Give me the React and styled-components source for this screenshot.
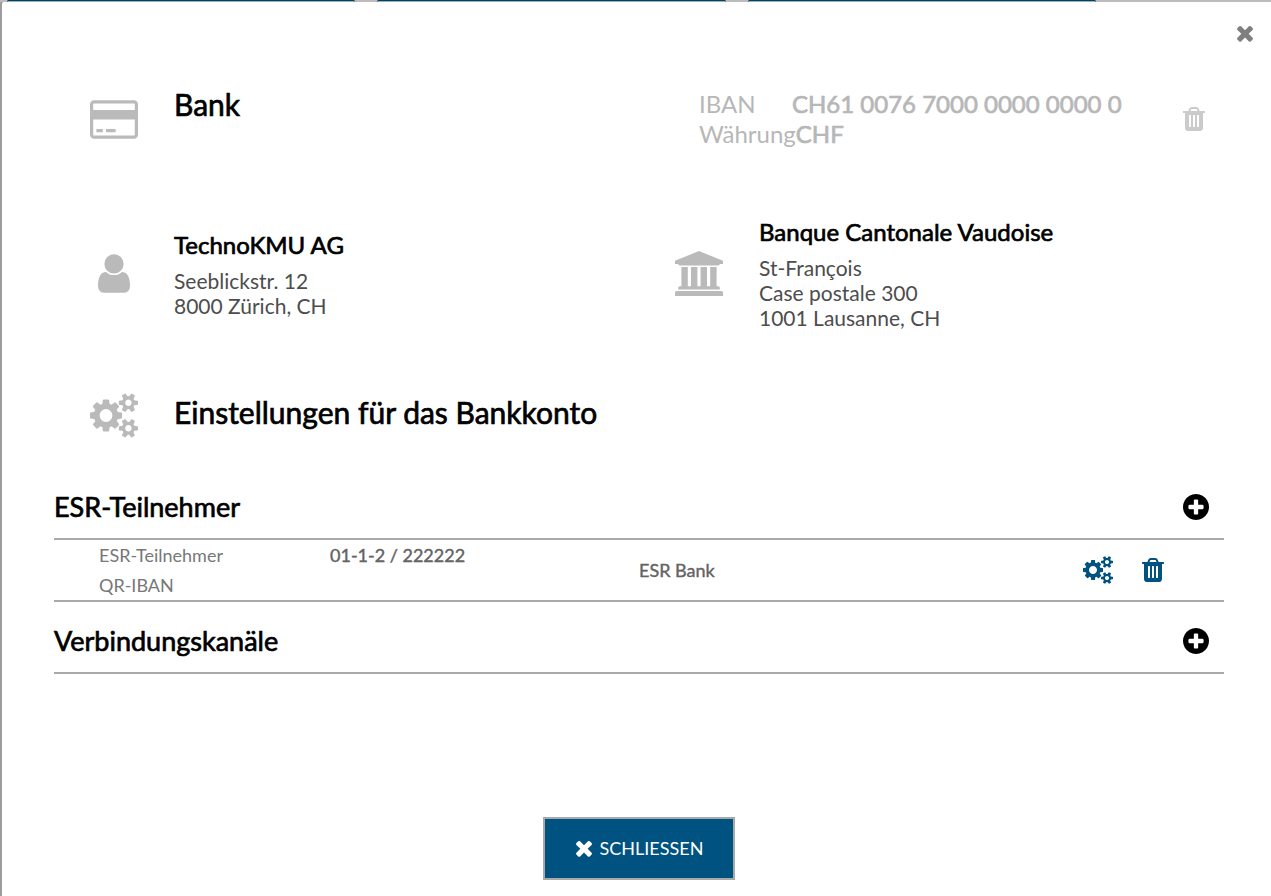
import React from "react";
import styled, { createGlobalStyle, css } from "styled-components";

const color = {
  primary: "#005380",
  primaryDimmed: "#004166",
  rule: "#a9a9a9",
  icon: "#bababa",
  muted: "#b7b7b7",
};

const GlobalStyle = createGlobalStyle`
  *, *::before, *::after { box-sizing: border-box; }
  body {
    margin: 0;
    background: #9c9c9c;
    color: #000;
    font-family: Lato, "Open Sans", sans-serif;
  }
  h1, h2, h3, p, dl, dd { margin: 0; font-weight: 400; }
`;

const paths = {
  times: [
    "0 0 1792 1792",
    "M1490 1322q0 40-28 68l-136 136q-28 28-68 28t-68-28l-294-294-294 294q-28 28-68 28t-68-28l-136-136q-28-28-28-68t28-68l294-294-294-294q-28-28-28-68t28-68l136-136q28-28 68-28t68 28l294 294 294-294q28-28 68-28t68 28l136 136q28 28 28 68t-28 68l-294 294 294 294q28 28 28 68z",
  ],
  plus: [
    "128 128 1536 1536",
    "M1344 960v-128q0-26-19-45t-45-19h-256v-256q0-26-19-45t-45-19h-128q-26 0-45 19t-19 45v256h-256q-26 0-45 19t-19 45v128q0 26 19 45t45 19h256v256q0 26 19 45t45 19h128q26 0 45-19t19-45v-256h256q26 0 45-19t19-45zm320-64q0 209-103 385.5t-279.5 279.5-385.5 103-385.5-103-279.5-279.5-103-385.5 103-385.5 279.5-279.5 385.5-103 385.5 103 279.5 279.5 103 385.5z",
  ],
  trash: [
    "192 128 1408 1536",
    "M704 1376v-704q0-14-9-23t-23-9h-64q-14 0-23 9t-9 23v704q0 14 9 23t23 9h64q14 0 23-9t9-23zm256 0v-704q0-14-9-23t-23-9h-64q-14 0-23 9t-9 23v704q0 14 9 23t23 9h64q14 0 23-9t9-23zm256 0v-704q0-14-9-23t-23-9h-64q-14 0-23 9t-9 23v704q0 14 9 23t23 9h64q14 0 23-9t9-23zm-544-992h448l-48-117q-7-9-17-11h-317q-10 2-17 11zm928 32v64q0 14-9 23t-23 9h-96v948q0 83-47 143.5t-113 60.5h-832q-66 0-113-58.5t-47-141.5v-952h-96q-14 0-23-9t-9-23v-64q0-14 9-23t23-9h309l70-167q15-37 54-63t79-26h320q40 0 79 26t54 63l70 167h309q14 0 23 9t9 23z",
  ],
  card: [
    "0 0 1920 1536",
    "M1760 0q66 0 113 47t47 113v1216q0 66-47 113t-113 47H160q-66 0-113-47T0 1376V160Q0 94 47 47T160 0h1600zM160 128q-13 0-22.5 9.5T128 160v224h1664V160q0-13-9.5-22.5T1760 128H160zm1600 1280q13 0 22.5-9.5t9.5-22.5V768H128v608q0 13 9.5 22.5t22.5 9.5h1600zM256 1280v-128h256v128H256zm384 0v-128h384v128H640z",
  ],
  user: [
    "256 128 1280 1536",
    "M1536 1399q0 109-62.5 187t-150.5 78h-854q-88 0-150.5-78t-62.5-187q0-85 8.5-160.5t31.5-152 58.5-131 94-89 134.5-34.5q131 128 313 128t313-128q76 0 134.5 34.5t94 89 58.5 131 31.5 152 8.5 160.5zm-256-887q0 159-112.5 271.5t-271.5 112.5-271.5-112.5-112.5-271.5 112.5-271.5 271.5-112.5 271.5 112.5 112.5 271.5z",
  ],
  bank: [
    "0 0 1920 1792",
    "M960 0l960 384v128h-128q0 26-20.5 45t-48.5 19h-1526q-28 0-48.5-19t-20.5-45h-128v-128zm-704 640h256v768h128v-768h256v768h128v-768h256v768h128v-768h256v768h59q28 0 48.5 19t20.5 45v64h-1664v-64q0-26 20.5-45t48.5-19h59v-768zm1595 960q28 0 48.5 19t20.5 45v128h-1920v-128q0-26 20.5-45t48.5-19h1782z",
  ],
  cogs: [
    "0 0 1920 1792",
    "M896 896q0-106-75-181t-181-75-181 75-75 181 75 181 181 75 181-75 75-181zm768 512q0-52-38-90t-90-38-90 38-38 90q0 53 37.5 90.5t90.5 37.5 90.5-37.5 37.5-90.5zm0-1024q0-52-38-90t-90-38-90 38-38 90q0 53 37.5 90.5t90.5 37.5 90.5-37.5 37.5-90.5zm-384 421v185q0 10-7 19.5t-16 10.5l-155 24q-11 35-32 76 34 48 90 115 7 11 7 20 0 12-7 19-23 30-82.5 89.5t-78.5 59.5q-11 0-21-7l-115-90q-37 19-77 31-11 108-23 155-7 24-30 24h-186q-11 0-20-7.5t-10-17.5l-23-153q-34-10-75-31l-118 89q-7 7-20 7-11 0-21-8-144-133-144-160 0-9 7-19 10-14 41-53t47-61q-23-44-35-82l-152-24q-10-1-17-9.5t-7-19.5v-185q0-10 7-19.5t16-10.5l155-24q11-35 32-76-34-48-90-115-7-11-7-20 0-12 7-20 22-30 82-89t79-59q11 0 21 7l115 90q34-18 77-32 11-108 23-154 7-24 30-24h186q11 0 20 7.5t10 17.5l23 153q34 10 75 31l118-89q8-7 20-7 11 0 21 8 144 133 144 160 0 8-7 19-12 16-42 54t-45 60q23 48 34 82l152 23q10 2 17 10.5t7 19.5zm640 533v140q0 16-149 31-12 27-30 52 51 113 51 138 0 4-4 7-122 71-124 71-8 0-46-47t-52-68q-20 2-30 2t-30-2q-14 21-52 68t-46 47q-2 0-124-71-4-3-4-7 0-25 51-138-18-25-30-52-149-15-149-31v-140q0-16 149-31 13-29 30-52-51-113-51-138 0-4 4-7 4-2 35-20t59-34 30-16q8 0 46 46.5t52 67.5q20-2 30-2t30 2q51-71 92-112l6-2q4 0 124 70 4 3 4 7 0 25-51 138 17 23 30 52 149 15 149 31zm0-1024v140q0 16-149 31-12 27-30 52 51 113 51 138 0 4-4 7-122 71-124 71-8 0-46-47t-52-68q-20 2-30 2t-30-2q-14 21-52 68t-46 47q-2 0-124-71-4-3-4-7 0-25 51-138-18-25-30-52-149-15-149-31v-140q0-16 149-31 13-29 30-52-51-113-51-138 0-4 4-7 4-2 35-20t59-34 30-16q8 0 46 46.5t52 67.5q20-2 30-2t30 2q51-71 92-112l6-2q4 0 124 70 4 3 4 7 0 25-51 138 17 23 30 52 149 15 149 31z",
  ],
};

const Svg = styled.svg`
  display: block;
  flex: none;
  fill: currentColor;
`;

function Icon({ name, width, height }) {
  const [box, d] = paths[name];
  return (
    <Svg viewBox={box} width={width} height={height} aria-hidden="true">
      <path d={d} />
    </Svg>
  );
}

/* Regular weight thickened slightly, for headings and values */
const emphasis = css`
  -webkit-text-stroke: 0.7px currentColor;
`;

const lightEmphasis = css`
  -webkit-text-stroke: 0.4px currentColor;
`;

const Backdrop = styled.div`
  min-height: 100vh;
  padding-left: 2px;
  display: flex;
  flex-direction: column;
  background: #9c9c9c;
`;

const Tiles = styled.div`
  flex: none;
  height: 2px;
  margin-left: -2px;
  padding: 0 175px 0 7px;
  display: grid;
  grid-template-columns: repeat(3, 1fr);
  gap: 22px;
  background: #bcbcbc;
`;

const Tile = styled.div`
  border: solid #7a7a7a;
  border-width: 0 1px;
  background: linear-gradient(${color.primaryDimmed} 50%, #9fb0bb 50%);
`;

const Dialog = styled.section`
  flex: 1;
  padding: 19px 47px 16px 52px;
  display: flex;
  flex-direction: column;
  border-top-left-radius: 2px;
  background: #fff;
`;

const IconButton = styled.button`
  display: inline-flex;
  padding: 0;
  border: 0;
  background: none;
  color: ${(p) => p.$color};
  cursor: pointer;
`;

const TopBar = styled.div`
  display: flex;
  justify-content: flex-end;
  margin-right: -33px;
`;

const Columns = styled.div`
  display: grid;
  grid-template-columns: 1fr 1fr;
  align-items: center;
`;

const HeaderRow = styled(Columns)`
  align-items: stretch;
  margin-top: 44px;
`;

const PartyRow = styled(Columns)`
  margin-top: 68px;
`;

const Entry = styled.div`
  display: grid;
  grid-template-columns: 120px 1fr;
  align-items: ${(p) => p.$align || "center"};
`;

const IconCell = styled.div`
  display: flex;
  justify-content: center;
  align-self: center;
  color: ${color.icon};
`;

const Title = styled.h1`
  font-size: 30px;
  line-height: 30px;
  ${emphasis}
`;

const SettingsTitle = styled(Title).attrs({ as: "h2" })`
  padding-bottom: 8px;
`;

const SettingsRow = styled(Entry)`
  margin-top: 63px;
`;

const AccountBar = styled.div`
  display: flex;
  justify-content: space-between;
  align-items: center;
  padding: 0 19px 0 60px;
`;

const AccountFacts = styled.dl`
  color: ${color.muted};
  font-size: 24px;
  line-height: 30px;
`;

const Fact = styled.div`
  display: flex;
  white-space: nowrap;
`;

const FactLabel = styled.dt`
  min-width: 93px;
`;

const FactValue = styled.dd`
  ${emphasis}
`;

const PartyName = styled.h2`
  margin-bottom: 8px;
  font-size: 24px;
  line-height: 30px;
  ${emphasis}
`;

const Address = styled.p`
  color: #4d4d4d;
  font-size: 21px;
  line-height: 25px;
`;

const SectionHead = styled.header`
  display: flex;
  justify-content: space-between;
  align-items: center;
  height: 64px;
  margin-top: ${(p) => p.$gap};
  padding-right: 15px;
  border-bottom: 2px solid ${color.rule};
`;

const SectionTitle = styled.h3`
  font-size: 27px;
  line-height: 32px;
  ${emphasis}
`;

const Participant = styled(Columns)`
  border-bottom: 2px solid ${color.rule};
  color: #636363;
  font-size: 18px;
  line-height: 30px;
`;

const ParticipantFacts = styled.dl`
  padding-left: 45px;
`;

const ParticipantFact = styled.div`
  display: grid;
  grid-template-columns: 231px 1fr;
`;

const ParticipantLabel = styled.dt`
  color: #777;
`;

const ParticipantValue = styled.dd`
  ${lightEmphasis}
`;

const ParticipantBank = styled.div`
  display: flex;
  justify-content: space-between;
  align-items: center;
  padding-right: 60px;
`;

const BankName = styled.span`
  ${lightEmphasis}
`;

const Actions = styled.div`
  display: flex;
  align-items: center;
  gap: 29px;
`;

const Footer = styled.footer`
  display: flex;
  justify-content: center;
  margin-top: auto;
`;

const CloseButton = styled.button`
  display: inline-flex;
  align-items: center;
  justify-content: center;
  gap: 4px;
  min-width: 192px;
  height: 63px;
  padding: 0 8px 2px 5px;
  border: 2px solid ${color.rule};
  background: ${color.primary};
  color: #fff;
  font: 400 18px/24px Lato, "Open Sans", sans-serif;
  text-transform: uppercase;
  cursor: pointer;
`;

function Section({ title, gap, children }) {
  return (
    <>
      <SectionHead $gap={gap}>
        <SectionTitle>{title}</SectionTitle>
        <IconButton $color="#000" aria-label={`${title} hinzufügen`}>
          <Icon name="plus" width={26} height={26} />
        </IconButton>
      </SectionHead>
      {children}
    </>
  );
}

function Party({ icon, width, height, name, lines }) {
  return (
    <Entry>
      <IconCell>
        <Icon name={icon} width={width} height={height} />
      </IconCell>
      <div>
        <PartyName>{name}</PartyName>
        {lines.map((line) => (
          <Address key={line}>{line}</Address>
        ))}
      </div>
    </Entry>
  );
}

export default function App() {
  return (
    <>
      <GlobalStyle />
      <Backdrop>
        <Tiles>
          <Tile />
          <Tile />
          <Tile />
        </Tiles>
        <Dialog role="dialog" aria-label="Bank">
          <TopBar>
            <IconButton $color="#7f7f7f" aria-label="Dialog schliessen">
              <Icon name="times" width={24} height={24} />
            </IconButton>
          </TopBar>

          <HeaderRow>
            <Entry $align="start">
              <IconCell>
                <Icon name="card" width={48} height={39} />
              </IconCell>
              <Title>Bank</Title>
            </Entry>
            <AccountBar>
              <AccountFacts>
                <Fact>
                  <FactLabel>IBAN</FactLabel>
                  <FactValue>CH61 0076 7000 0000 0000 0</FactValue>
                </Fact>
                <Fact>
                  <FactLabel>Währung</FactLabel>
                  <FactValue>CHF</FactValue>
                </Fact>
              </AccountFacts>
              <IconButton $color="#cbcbcb" aria-label="Konto löschen">
                <Icon name="trash" width={22} height={24} />
              </IconButton>
            </AccountBar>
          </HeaderRow>

          <PartyRow>
            <Party
              icon="user"
              width={32}
              height={39}
              name="TechnoKMU AG"
              lines={["Seeblickstr. 12", "8000 Zürich, CH"]}
            />
            <Party
              icon="bank"
              width={48}
              height={45}
              name="Banque Cantonale Vaudoise"
              lines={["St-François", "Case postale 300", "1001 Lausanne, CH"]}
            />
          </PartyRow>

          <SettingsRow>
            <IconCell>
              <Icon name="cogs" width={48} height={45} />
            </IconCell>
            <SettingsTitle>Einstellungen für das Bankkonto</SettingsTitle>
          </SettingsRow>

          <Section title="ESR-Teilnehmer" gap="38px">
            <Participant>
              <ParticipantFacts>
                <ParticipantFact>
                  <ParticipantLabel>ESR-Teilnehmer</ParticipantLabel>
                  <ParticipantValue>01-1-2 / 222222</ParticipantValue>
                </ParticipantFact>
                <ParticipantFact>
                  <ParticipantLabel>QR-IBAN</ParticipantLabel>
                  <ParticipantValue />
                </ParticipantFact>
              </ParticipantFacts>
              <ParticipantBank>
                <BankName>ESR Bank</BankName>
                <Actions>
                  <IconButton $color={color.primary} aria-label="Einstellungen">
                    <Icon name="cogs" width={30} height={28} />
                  </IconButton>
                  <IconButton $color={color.primary} aria-label="Löschen">
                    <Icon name="trash" width={22} height={24} />
                  </IconButton>
                </Actions>
              </ParticipantBank>
            </Participant>
          </Section>
          <Section title="Verbindungskanäle" gap="8px" />

          <Footer>
            <CloseButton>
              <Icon name="times" width={24} height={24} />
              Schliessen
            </CloseButton>
          </Footer>
        </Dialog>
      </Backdrop>
    </>
  );
}
